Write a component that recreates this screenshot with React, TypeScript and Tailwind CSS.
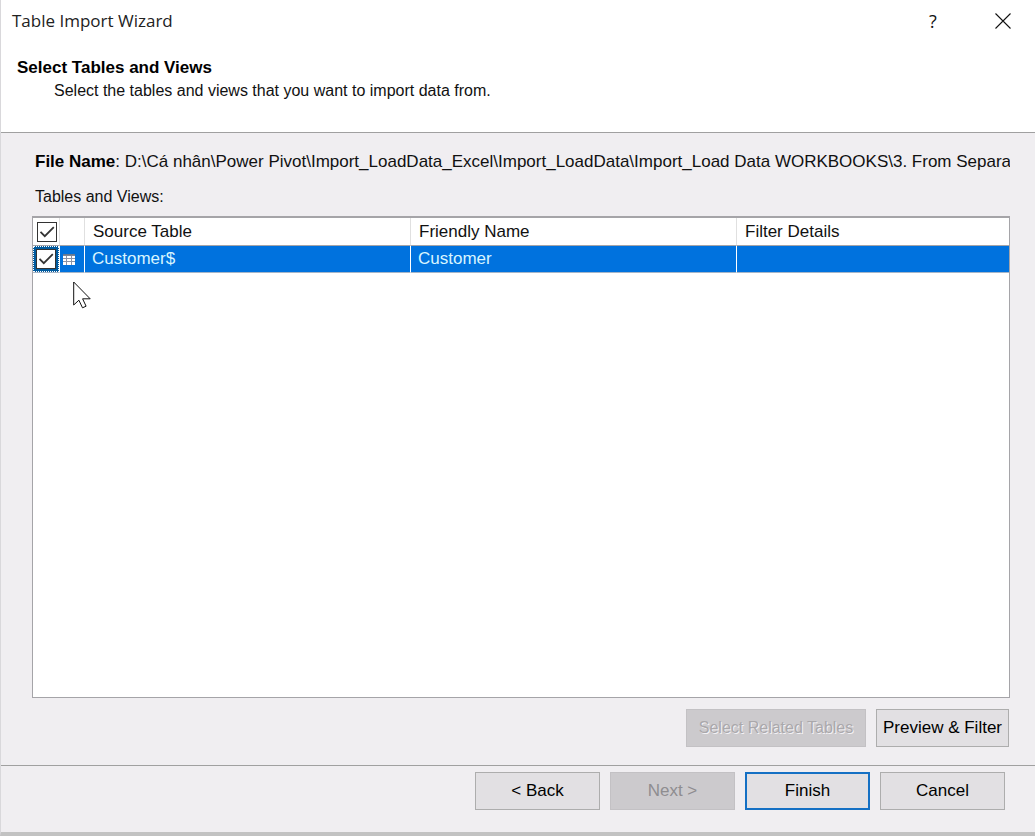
import { useState } from "react";
import type { ButtonHTMLAttributes } from "react";

type CheckProps = {
  label: string;
  checked: boolean;
  onChange: (value: boolean) => void;
};

function Check({ label, checked, onChange }: CheckProps) {
  return (
    <span className="relative block size-5">
      <input
        type="checkbox"
        aria-label={label}
        checked={checked}
        onChange={(e) => onChange(e.target.checked)}
        className="block size-5 appearance-none border border-[#333] bg-white"
      />
      {checked && (
        <svg viewBox="0 0 20 20" className="pointer-events-none absolute inset-0 size-5" aria-hidden="true">
          <path d="M3.5 9.8 7.8 14.2 16.8 5.2" fill="none" stroke="#333" strokeWidth="1.8" />
        </svg>
      )}
    </span>
  );
}

function TableIcon() {
  return (
    <svg viewBox="0 0 12 11" className="block h-[11px] w-3" aria-hidden="true">
      <rect width="12" height="11" fill="#8b93a5" />
      <path fill="#66788f" d="M0 0h12v1.5H0z" />
      <path
        d="M0 2h3v2H0zM4 2h4v2H4zM9 2h3v2H9zM0 5h3v2H0zM4 5h4v2H4zM9 5h3v2H9zM0 8h3v3H0zM4 8h4v3H4zM9 8h3v3H9z"
        fill="#fff"
      />
    </svg>
  );
}

function DialogButton({ className = "", ...rest }: ButtonHTMLAttributes<HTMLButtonElement>) {
  return (
    <button
      type="button"
      className={`h-[38px] border whitespace-nowrap ${className}`}
      {...rest}
    />
  );
}

const normal = "border-[#adadad] bg-[#e2e0e3] text-[17px] text-black";
const disabled = "border-[#c3c1c4] bg-[#cccacd]";

export default function App() {
  const [selected, setSelected] = useState(true);

  return (
    <div className="relative flex min-h-screen flex-col border-b-4 border-l border-b-[#c2c2c2] border-l-[#d9d8db] bg-[#f0eef1] font-['Liberation_Sans',Arial,sans-serif] text-base leading-5 text-[#111]">
      <header className="h-[133px] border-b border-[#a0a0a0] bg-white">
        <div className="flex h-[42px] items-center justify-between pr-6 pl-[11px] font-['Open_Sans','Noto_Sans',sans-serif]">
          <h1 className="text-[17px] text-[#222]">Table Import Wizard</h1>
          <div className="flex items-center gap-[54px]">
            <button type="button" aria-label="Help" className="w-4 text-lg leading-5">
              ?
            </button>
            <button type="button" aria-label="Close">
              <svg viewBox="0 0 16 16" className="block size-4" aria-hidden="true">
                <path d="M.5.5 15.5 15.5M15.5.5.5 15.5" fill="none" stroke="#111" strokeWidth="1.1" />
              </svg>
            </button>
          </div>
        </div>
        <div className="px-4 pt-4">
          <h2 className="text-[17px] font-bold text-black">Select Tables and Views</h2>
          <p className="mt-[3px] pl-[37px]">Select the tables and views that you want to import data from.</p>
        </div>
      </header>

      <main className="flex grow flex-col pt-[19px] pr-[25px] pb-[18px] pl-[31px]">
        <p className="overflow-hidden pl-[3px] text-[17px] whitespace-nowrap">
          <b className="text-black">File Name</b>: D:\Cá nhân\Power Pivot\Import_LoadData_Excel\Import_LoadData\Import_Load
          Data WORKBOOKS\3. From Separate
        </p>
        <p className="mt-[15px] pl-[3px]">Tables and Views:</p>

        <div className="mt-[9px] grow border border-t-2 border-[#a5a4a8] bg-white">
          <table className="w-full table-fixed border-separate border-spacing-0 text-left text-[17px]">
            <colgroup>
              <col className="w-[27px]" />
              <col className="w-[25px]" />
              <col className="w-[326px]" />
              <col className="w-[326px]" />
              <col />
            </colgroup>
            <thead>
              <tr className="h-7 *:border-b *:border-b-[#a5a4a8]">
                <th className="border-r border-r-[#e0e0e0] p-0 pl-1">
                  <Check label="Select all tables" checked={selected} onChange={setSelected} />
                </th>
                <th className="border-r border-r-[#e0e0e0] p-0" aria-label="Type" />
                <th className="border-r border-r-[#e0e0e0] p-0 pl-2 font-normal">Source Table</th>
                <th className="border-r border-r-[#e0e0e0] p-0 pl-2 font-normal">Friendly Name</th>
                <th className="p-0 pl-2 font-normal">Filter Details</th>
              </tr>
            </thead>
            <tbody>
              <tr className="h-[27px] bg-[#0072de] text-[#d9f5ff] *:border-b *:border-b-[#a5b5c8]">
                <td className="border-r border-r-white p-0">
                  <div className="flex h-[26px] items-center border border-dotted border-white bg-[#005a9e] pl-[2px]">
                    <Check label="Select Customer$" checked={selected} onChange={setSelected} />
                  </div>
                </td>
                <td className="border-r border-r-white p-0 pl-[3px]">
                  <TableIcon />
                </td>
                <td className="border-r border-r-white p-0 pl-[7px]">Customer$</td>
                <td className="border-r border-r-white p-0 pl-[7px]">Customer</td>
                <td className="p-0" />
              </tr>
            </tbody>
          </table>
        </div>

        <div className="mt-[11px] flex justify-end gap-[10px] pr-px">
          <DialogButton
            disabled
            className={`w-[180px] ${disabled} text-[#aaa8ab] [text-shadow:1px_1px_0_#f4f2f5]`}
          >
            Select Related Tables
          </DialogButton>
          <DialogButton className={`w-[133px] ${normal}`}>Preview &amp; Filter</DialogButton>
        </div>
      </main>

      <footer className="flex justify-end gap-[10px] border-t border-[#a0a0a0] pt-[6px] pr-[30px] pb-[22px]">
        <DialogButton className={`w-[125px] ${normal}`}>&lt; Back</DialogButton>
        <DialogButton disabled className={`w-[125px] ${disabled} text-[17px] text-[#8f8d90]`}>
          Next &gt;
        </DialogButton>
        <DialogButton className="w-[125px] border-2 border-[#1570c4] bg-[#e2e0e3] text-[17px] text-black">
          Finish
        </DialogButton>
        <DialogButton className={`w-[125px] ${normal}`}>Cancel</DialogButton>
      </footer>

      <svg
        viewBox="0 0 18 28"
        className="pointer-events-none absolute top-[281px] left-[72px] h-7 w-[18px]"
        aria-hidden="true"
      >
        <path
          d="M.7 1v23l5.2-4.8 3.6 7.6 3.6-1.6-3.5-7.4h7.6z"
          fill="#fff"
          stroke="#111"
          strokeWidth="1"
        />
      </svg>
    </div>
  );
}
